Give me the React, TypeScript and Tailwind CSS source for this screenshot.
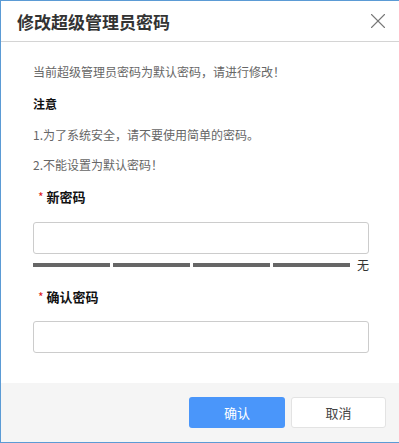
import { X } from "lucide-react";

export default function App() {
  const font = { fontFamily: '"Noto Sans CJK SC", "Noto Sans", sans-serif' };

  return (
    <div className="w-[399px] h-[443px] bg-white border-l border-t border-b border-[#5b9bd5] flex flex-col overflow-hidden" style={font}>
      {/* Header */}
      <div className="h-[41px] shrink-0 flex items-center justify-between pl-[16px] pr-[8px] border-b border-[#d4d4d4]">
        <h1 className="text-[17px] font-bold text-[#333] leading-none">修改超级管理员密码</h1>
        <X className="w-[26px] h-[26px] text-[#777]" strokeWidth={1} />
      </div>

      {/* Body */}
      <div className="flex-1 pl-[32px] pr-[30px] pt-[20px]">
        <p className="text-[12px] leading-[20px] text-[#666]">当前超级管理员密码为默认密码，请进行修改！</p>
        <p className="mt-[12px] text-[12px] leading-[20px] font-bold text-[#111]">注意</p>
        <p className="mt-[11px] text-[12px] leading-[20px] text-[#666]">1.为了系统安全，请不要使用简单的密码。</p>
        <p className="mt-[10px] text-[12px] leading-[20px] text-[#666]">2.不能设置为默认密码！</p>

        <div className="mt-[12px] flex items-center h-[20px] pl-[5px]">
          <span className="text-[#e02020] text-[12px] mr-[3px] leading-none">*</span>
          <span className="text-[13px] font-bold text-[#111]">新密码</span>
        </div>
        <input type="password" className="mt-[15px] block w-[336px] h-[32px] border border-[#cccccc] rounded-[3px] outline-none" />
        <div className="mt-[5px] flex items-center gap-[3px] h-[12px]">
          <div className="w-[77px] h-[4px] bg-[#666]" />
          <div className="w-[77px] h-[4px] bg-[#666]" />
          <div className="w-[77px] h-[4px] bg-[#666]" />
          <div className="w-[77px] h-[4px] bg-[#666]" />
          <span className="ml-[4px] text-[12px] leading-none text-[#333]">无</span>
        </div>

        <div className="mt-[16px] flex items-center h-[20px] pl-[5px]">
          <span className="text-[#e02020] text-[12px] mr-[3px] leading-none">*</span>
          <span className="text-[13px] font-bold text-[#111]">确认密码</span>
        </div>
        <input type="password" className="mt-[14px] block w-[336px] h-[32px] border border-[#cccccc] rounded-[3px] outline-none" />
      </div>

      {/* Footer */}
      <div className="h-[59px] shrink-0 bg-[#f5f5f5] flex items-start justify-end gap-[6px] pt-[14px] pr-[13px]">
        <button className="w-[96px] h-[31px] rounded-[3px] bg-[#4a96fa] text-white text-[13px]">确认</button>
        <button className="w-[95px] h-[31px] rounded-[3px] bg-white border border-[#e3e3e3] text-[#444] text-[13px]">取消</button>
      </div>
    </div>
  );
}
